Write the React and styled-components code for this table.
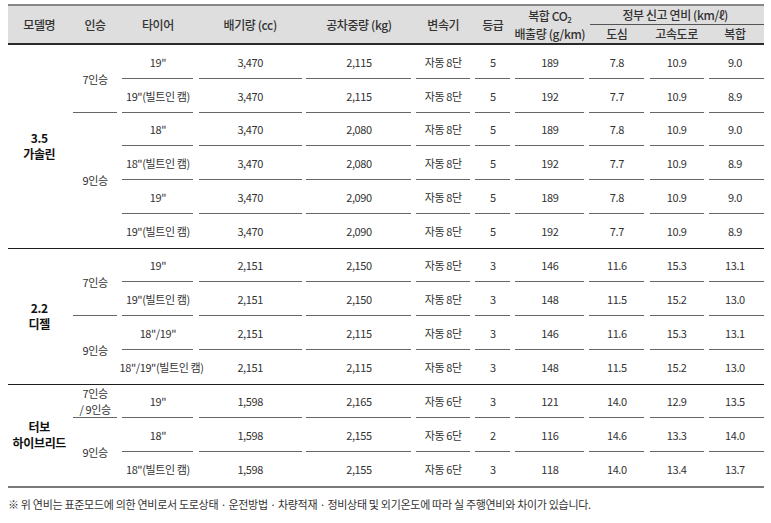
import React from 'react';
import styled, { createGlobalStyle } from 'styled-components';

const GlobalStyle = createGlobalStyle`
    body {
        margin: 0;
        padding: 4px 8px 0;
        background: #fff;
        font-family: "Noto Sans CJK KR", "Noto Sans", sans-serif;
        color: #333;
    }
`;

const Table = styled.table`
    width: 755.5px;
    table-layout: fixed;
    border-collapse: collapse;
    border-spacing: 0;
    font-size: 11px;
    letter-spacing: -0.4px;
`;

const HeadRow = styled.tr`
    background: #dedede;
`;

const HeadCell = styled.th`
    padding: 0;
    height: 18.5px;
    font-size: 12px;
    font-weight: 500;
    color: #333;
    text-align: center;
    vertical-align: middle;
    line-height: 16px;
    border-top: ${p => (p.$sub ? 'none' : '2px solid #888')};
    border-bottom: ${p => (p.$group ? 'none' : '2px solid #2a2a2a')};
    ${p => p.$group && `
        background: linear-gradient(#555, #555) no-repeat right bottom / calc(100% - 3px) 1px;
    `}
`;

const Sub = styled.span`
    font-size: 8px;
    position: relative;
    top: 2px;
`;

const innerLine = '#666';

const Cell = styled.td`
    padding: 0;
    height: 33.75px;
    text-align: center;
    vertical-align: middle;
    line-height: 16px;
    color: #333;
    white-space: nowrap;
    border-bottom: ${p =>
        p.$line === 'group' ? '1px solid #1f1f1f' : p.$line === 'end' ? '2px solid #7a7a7a' : 'none'};
    ${p => p.$line === 'inner' && `
        background: linear-gradient(${innerLine}, ${innerLine}) no-repeat
            ${p.$last ? 'right bottom' : 'center bottom'} /
            calc(100% - ${p.$last ? '3px' : '5px'}) 1px;
    `}
`;

const ModelCell = styled(Cell)`
    font-weight: 700;
    font-size: 12px;
    color: #111;
    letter-spacing: -0.3px;
`;

const Note = styled.p`
    margin: 8px 0 0;
    font-size: 11px;
    letter-spacing: -0.3px;
    color: #333;
`;

const widths = [62.5, 49, 76.5, 108, 109.5, 59, 40, 74, 60, 59.5, 57];

const models = [
    {
        name: ['3.5', '가솔린'],
        groups: [
            {
                seat: ['7인승'],
                rows: [
                    ['19"', '3,470', '2,115', '자동 8단', '5', '189', '7.8', '10.9', '9.0'],
                    ['19"(빌트인 캠)', '3,470', '2,115', '자동 8단', '5', '192', '7.7', '10.9', '8.9'],
                ],
            },
            {
                seat: ['9인승'],
                rows: [
                    ['18"', '3,470', '2,080', '자동 8단', '5', '189', '7.8', '10.9', '9.0'],
                    ['18"(빌트인 캠)', '3,470', '2,080', '자동 8단', '5', '192', '7.7', '10.9', '8.9'],
                    ['19"', '3,470', '2,090', '자동 8단', '5', '189', '7.8', '10.9', '9.0'],
                    ['19"(빌트인 캠)', '3,470', '2,090', '자동 8단', '5', '192', '7.7', '10.9', '8.9'],
                ],
            },
        ],
    },
    {
        name: ['2.2', '디젤'],
        groups: [
            {
                seat: ['7인승'],
                rows: [
                    ['19"', '2,151', '2,150', '자동 8단', '3', '146', '11.6', '15.3', '13.1'],
                    ['19"(빌트인 캠)', '2,151', '2,150', '자동 8단', '3', '148', '11.5', '15.2', '13.0'],
                ],
            },
            {
                seat: ['9인승'],
                rows: [
                    ['18"/19"', '2,151', '2,115', '자동 8단', '3', '146', '11.6', '15.3', '13.1'],
                    ['18"/19"(빌트인 캠)', '2,151', '2,115', '자동 8단', '3', '148', '11.5', '15.2', '13.0'],
                ],
            },
        ],
    },
    {
        name: ['터보', '하이브리드'],
        groups: [
            {
                seat: ['7인승', '/ 9인승'],
                rows: [
                    ['19"', '1,598', '2,165', '자동 6단', '3', '121', '14.0', '12.9', '13.5'],
                ],
            },
            {
                seat: ['9인승'],
                rows: [
                    ['18"', '1,598', '2,155', '자동 6단', '2', '116', '14.6', '13.3', '14.0'],
                    ['18"(빌트인 캠)', '1,598', '2,155', '자동 6단', '3', '118', '14.0', '13.4', '13.7'],
                ],
            },
        ],
    },
];

const Lines = ({ items }) =>
    items.map((t, i) => (
        <React.Fragment key={i}>
            {i > 0 && <br />}
            {t}
        </React.Fragment>
    ));

function App() {
    const body = [];

    models.forEach((model, mi) => {
        const lastModel = mi === models.length - 1;
        const closing = lastModel ? 'end' : 'group';
        const total = model.groups.reduce((n, g) => n + g.rows.length, 0);

        model.groups.forEach((group, gi) => {
            const lastGroup = gi === model.groups.length - 1;

            group.rows.forEach((row, ri) => {
                const lastRow = lastGroup && ri === group.rows.length - 1;
                const line = lastRow ? closing : 'inner';

                body.push(
                    <tr key={`${mi}-${gi}-${ri}`}>
                        {gi === 0 && ri === 0 && (
                            <ModelCell rowSpan={total} $line={closing}>
                                <Lines items={model.name} />
                            </ModelCell>
                        )}
                        {ri === 0 && (
                            <Cell rowSpan={group.rows.length} $line={lastGroup ? closing : 'inner'}>
                                <Lines items={group.seat} />
                            </Cell>
                        )}
                        {row.map((v, ci) => (
                            <Cell key={ci} $line={line} $last={ci === row.length - 1}>
                                {v}
                            </Cell>
                        ))}
                    </tr>
                );
            });
        });
    });

    return (
        <>
            <GlobalStyle />
            <Table>
                <colgroup>
                    {widths.map((w, i) => (
                        <col key={i} style={{ width: w }} />
                    ))}
                </colgroup>
                <thead>
                    <HeadRow>
                        <HeadCell rowSpan={2}>모델명</HeadCell>
                        <HeadCell rowSpan={2}>인승</HeadCell>
                        <HeadCell rowSpan={2}>타이어</HeadCell>
                        <HeadCell rowSpan={2}>배기량 (cc)</HeadCell>
                        <HeadCell rowSpan={2}>공차중량 (kg)</HeadCell>
                        <HeadCell rowSpan={2}>변속기</HeadCell>
                        <HeadCell rowSpan={2}>등급</HeadCell>
                        <HeadCell rowSpan={2}>
                            복합 CO<Sub>2</Sub>
                            <br />
                            배출량 (g/km)
                        </HeadCell>
                        <HeadCell colSpan={3} $group>
                            정부 신고 연비 (km/ℓ)
                        </HeadCell>
                    </HeadRow>
                    <HeadRow>
                        <HeadCell $sub>도심</HeadCell>
                        <HeadCell $sub>고속도로</HeadCell>
                        <HeadCell $sub>복합</HeadCell>
                    </HeadRow>
                </thead>
                <tbody>{body}</tbody>
            </Table>
            <Note>
                ※ 위 연비는 표준모드에 의한 연비로서 도로상태 · 운전방법 · 차량적재 · 정비상태 및 외기온도에 따라 실
                주행연비와 차이가 있습니다.
            </Note>
        </>
    );
}

export default App;
